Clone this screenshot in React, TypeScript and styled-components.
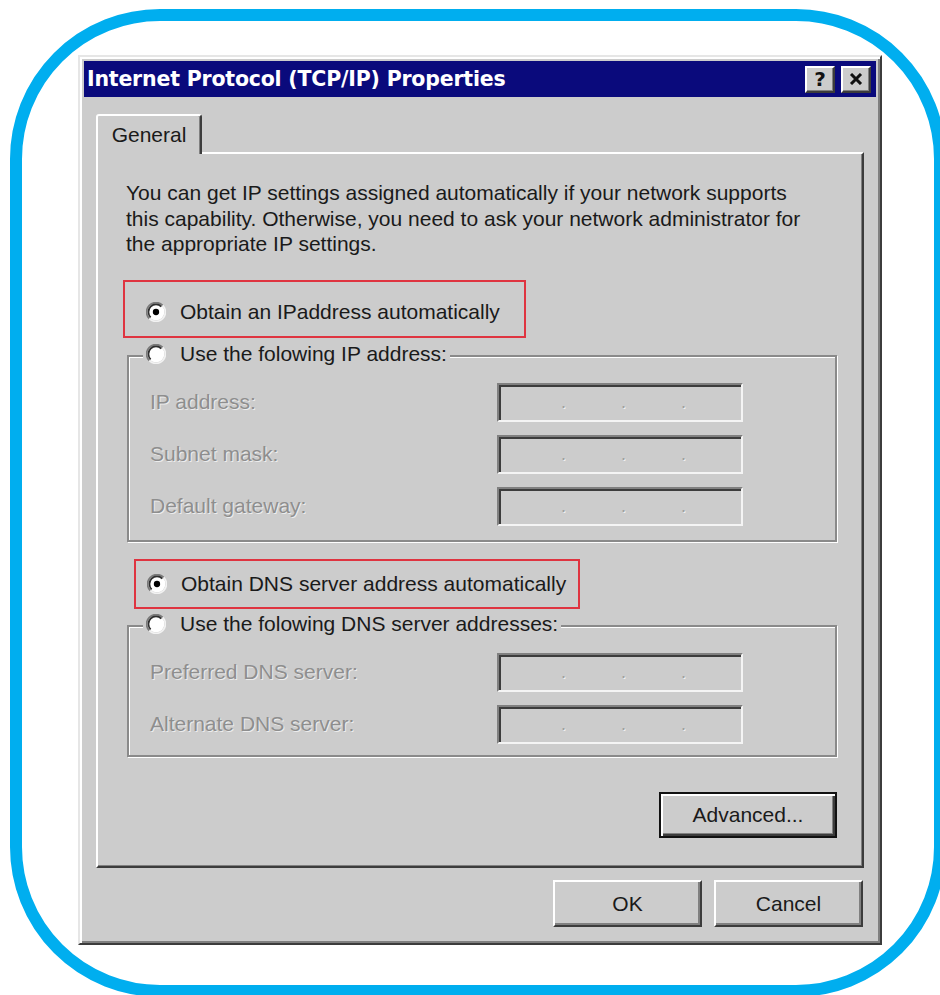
import React from "react";
import styled, { createGlobalStyle } from "styled-components";

const FACE = "#cccccc";
const NAVY = "#0a0a7c";
const SHADOW = "#808080";
const DARK = "#3c3c3c";
const TEXT_SIZE = "21px";

const GlobalStyle = createGlobalStyle`
  html, body {
    margin: 0;
    padding: 0;
    background: #ffffff;
    overflow: hidden;
  }
  body {
    font-family: "Liberation Sans", Arial, sans-serif;
  }
`;

const Frame = styled.div`
  margin: 9px 0 0 10px;
  width: 936px;
  height: 988px;
  box-sizing: border-box;
  border: 12px solid #00aeef;
  border-radius: 150px;
  padding: 34px 0 0 56px;
`;

const Dialog = styled.div`
  width: 804px;
  height: 890px;
  box-sizing: border-box;
  background: ${FACE};
  border: 2px solid;
  border-color: #e6e6e6 ${DARK} ${DARK} #e6e6e6;
  box-shadow: inset 2px 2px 0 #ffffff, inset -2px -2px 0 ${SHADOW};
  padding: 4px;
  display: flex;
  flex-direction: column;
`;

const TitleBar = styled.div`
  height: 36px;
  background: ${NAVY};
  display: flex;
  align-items: center;
  padding: 0 5px 0 3px;
`;

const TitleText = styled.div`
  flex: 1;
  color: #ffffff;
  font-family: "DejaVu Sans", Verdana, sans-serif;
  font-weight: bold;
  font-size: 20.5px;
  letter-spacing: -0.2px;
  white-space: nowrap;
`;

const TitleButtons = styled.div`
  display: flex;
  gap: 6px;
`;

const TitleButton = styled.div`
  width: 30px;
  height: 27px;
  box-sizing: border-box;
  background: ${FACE};
  border: 2px solid;
  border-color: #ffffff ${DARK} ${DARK} #ffffff;
  box-shadow: inset -1px -1px 0 ${SHADOW};
  display: flex;
  align-items: center;
  justify-content: center;
  font-family: "DejaVu Sans", Verdana, sans-serif;
  font-weight: bold;
  font-size: 20px;
  color: #111111;
`;

const Body = styled.div`
  flex: 1;
  display: flex;
  flex-direction: column;
  padding: 17px 12px 0 12px;
`;

const TabStrip = styled.div`
  display: flex;
`;

const Tab = styled.div`
  position: relative;
  z-index: 1;
  width: 106px;
  height: 40px;
  box-sizing: border-box;
  margin-bottom: -2px;
  background: ${FACE};
  border: 2px solid;
  border-bottom: 0;
  border-color: #ffffff ${DARK} transparent #ffffff;
  border-radius: 3px 3px 0 0;
  box-shadow: inset -1px 0 0 ${SHADOW};
  display: flex;
  align-items: center;
  justify-content: center;
  font-size: ${TEXT_SIZE};
  color: #1a1a1a;
`;

const Panel = styled.div`
  height: 716px;
  box-sizing: border-box;
  border: 2px solid;
  border-color: #ffffff ${DARK} ${DARK} #ffffff;
  box-shadow: inset -1px -1px 0 ${SHADOW};
  padding: 26px 25px 0 28px;
  display: flex;
  flex-direction: column;
`;

const Intro = styled.p`
  margin: 0;
  font-size: ${TEXT_SIZE};
  line-height: 25.5px;
  color: #1a1a1a;
  white-space: nowrap;
`;

const Highlight = styled.div<{ $w: number; $h: number; $top: number; $left: number; $pad: number; $drop: number }>`
  width: ${(p) => p.$w}px;
  height: ${(p) => p.$h}px;
  margin: ${(p) => p.$top}px 0 0 ${(p) => p.$left}px;
  padding: ${(p) => p.$drop}px 0 0 ${(p) => p.$pad}px;
  box-sizing: border-box;
  border: 2px solid #df3440;
  display: flex;
  align-items: center;
`;

const Choice = styled.span`
  display: inline-flex;
  align-items: center;
  gap: 14px;
  font-size: ${TEXT_SIZE};
  color: #1a1a1a;
  white-space: nowrap;
`;

const Group = styled.fieldset<{ $top: number; $padTop: number; $padBottom: number }>`
  margin: ${(p) => p.$top}px 0 0 1px;
  padding: ${(p) => p.$padTop}px 0 ${(p) => p.$padBottom}px 0;
  min-width: 0;
  border: 2px solid #8a8a8a;
  box-shadow: inset 1px 1px 0 #ffffff, 1px 1px 0 #ffffff;
`;

const GroupLegend = styled.legend`
  margin-left: 14px;
  padding: 0 3px;
  background: ${FACE};
  line-height: 24px;
`;

const FieldGrid = styled.div`
  display: grid;
  grid-template-columns: 347px 246px;
  row-gap: 13px;
  align-items: center;
  padding-left: 21px;
`;

const FieldLabel = styled.span`
  font-size: ${TEXT_SIZE};
  color: #8e8e8e;
  text-shadow: 1px 1px 0 #ededed;
  white-space: nowrap;
`;

const AddressBox = styled.div`
  width: 246px;
  height: 39px;
  box-sizing: border-box;
  border: 2px solid;
  border-color: ${SHADOW} #f4f4f4 #f4f4f4 ${SHADOW};
  box-shadow: inset 2px 2px 0 ${DARK};
  background: ${FACE};
  display: flex;
  align-items: center;
  padding-left: 6px;
`;

const Octet = styled.span`
  width: 56px;
`;

const Dot = styled.span`
  width: 4px;
  text-align: center;
  font-size: 18px;
  line-height: 1;
  color: #a0a0a0;
  text-shadow: 1px 1px 0 #f0f0f0;
`;

const PushButton = styled.button<{ $default?: boolean; $w: number; $h: number }>`
  width: ${(p) => p.$w}px;
  height: ${(p) => p.$h}px;
  box-sizing: border-box;
  padding: 0;
  background: ${FACE};
  font-family: "Liberation Sans", Arial, sans-serif;
  font-size: ${TEXT_SIZE};
  color: #1a1a1a;
  border: 2px solid;
  border-color: ${(p) => (p.$default ? "#111111" : `#ffffff ${DARK} ${DARK} #ffffff`)};
  box-shadow: ${(p) =>
    p.$default
      ? `inset 2px 2px 0 #ffffff, inset -2px -2px 0 ${DARK}, inset -3px -3px 0 ${SHADOW}`
      : `inset -2px -2px 0 ${SHADOW}`};
`;

const AdvancedRow = styled.div`
  display: flex;
  justify-content: flex-end;
  margin-top: 35px;
`;

const Footer = styled.div`
  display: flex;
  justify-content: flex-end;
  gap: 12px;
  margin-top: 12px;
  padding-right: 1px;
`;

const Radio: React.FC<{ checked?: boolean }> = ({ checked }) => (
  <svg width="20" height="20" viewBox="0 0 12 12" aria-hidden="true">
    <circle cx="6" cy="6" r="5" fill="#ffffff" />
    <path d="M10 2 A5.6 5.6 0 0 0 2 10" fill="none" stroke="#7a7a7a" strokeWidth="1" />
    <path d="M9.2 2.8 A4.5 4.5 0 0 0 2.8 9.2" fill="none" stroke="#2e2e2e" strokeWidth="1" />
    <path d="M2 10 A5.6 5.6 0 0 0 10 2" fill="none" stroke="#f2f2f2" strokeWidth="1" />
    {checked && <circle cx="6" cy="6" r="1.9" fill="#000000" />}
  </svg>
);

const CloseGlyph = () => (
  <svg width="14" height="12" viewBox="0 0 14 12" aria-hidden="true">
    <path d="M2 1 L12 11 M12 1 L2 11" stroke="#111111" strokeWidth="3" />
  </svg>
);

const AddressField = () => (
  <AddressBox>
    <Octet />
    <Dot>.</Dot>
    <Octet />
    <Dot>.</Dot>
    <Octet />
    <Dot>.</Dot>
  </AddressBox>
);

export default function App() {
  return (
    <>
      <GlobalStyle />
      <Frame>
        <Dialog>
          <TitleBar>
            <TitleText>Internet Protocol (TCP/IP) Properties</TitleText>
            <TitleButtons>
              <TitleButton>?</TitleButton>
              <TitleButton>
                <CloseGlyph />
              </TitleButton>
            </TitleButtons>
          </TitleBar>
          <Body>
            <TabStrip>
              <Tab>General</Tab>
            </TabStrip>
            <Panel>
              <Intro>
                You can get IP settings assigned automatically if your network supports
                <br />
                this capability. Otherwise, you need to ask your network administrator for
                <br />
                the appropriate IP settings.
              </Intro>

              <Highlight $w={403} $h={58} $top={23} $left={-3} $pad={21} $drop={6}>
                <Choice>
                  <Radio checked />
                  Obtain an IPaddress automatically
                </Choice>
              </Highlight>

              <Group $top={4} $padTop={12} $padBottom={14}>
                <GroupLegend>
                  <Choice>
                    <Radio />
                    Use the folowing IP address:
                  </Choice>
                </GroupLegend>
                <FieldGrid>
                  <FieldLabel>IP address:</FieldLabel>
                  <AddressField />
                  <FieldLabel>Subnet mask:</FieldLabel>
                  <AddressField />
                  <FieldLabel>Default gateway:</FieldLabel>
                  <AddressField />
                </FieldGrid>
              </Group>

              <Highlight $w={446} $h={50} $top={17} $left={8} $pad={11} $drop={0}>
                <Choice>
                  <Radio checked />
                  Obtain DNS server address automatically
                </Choice>
              </Highlight>

              <Group $top={3} $padTop={12} $padBottom={11}>
                <GroupLegend>
                  <Choice>
                    <Radio />
                    Use the folowing DNS server addresses:
                  </Choice>
                </GroupLegend>
                <FieldGrid>
                  <FieldLabel>Preferred DNS server:</FieldLabel>
                  <AddressField />
                  <FieldLabel>Alternate DNS server:</FieldLabel>
                  <AddressField />
                </FieldGrid>
              </Group>

              <AdvancedRow>
                <PushButton $default $w={178} $h={46}>
                  Advanced...
                </PushButton>
              </AdvancedRow>
            </Panel>
            <Footer>
              <PushButton $w={149} $h={47}>OK</PushButton>
              <PushButton $w={149} $h={47}>Cancel</PushButton>
            </Footer>
          </Body>
        </Dialog>
      </Frame>
    </>
  );
}
